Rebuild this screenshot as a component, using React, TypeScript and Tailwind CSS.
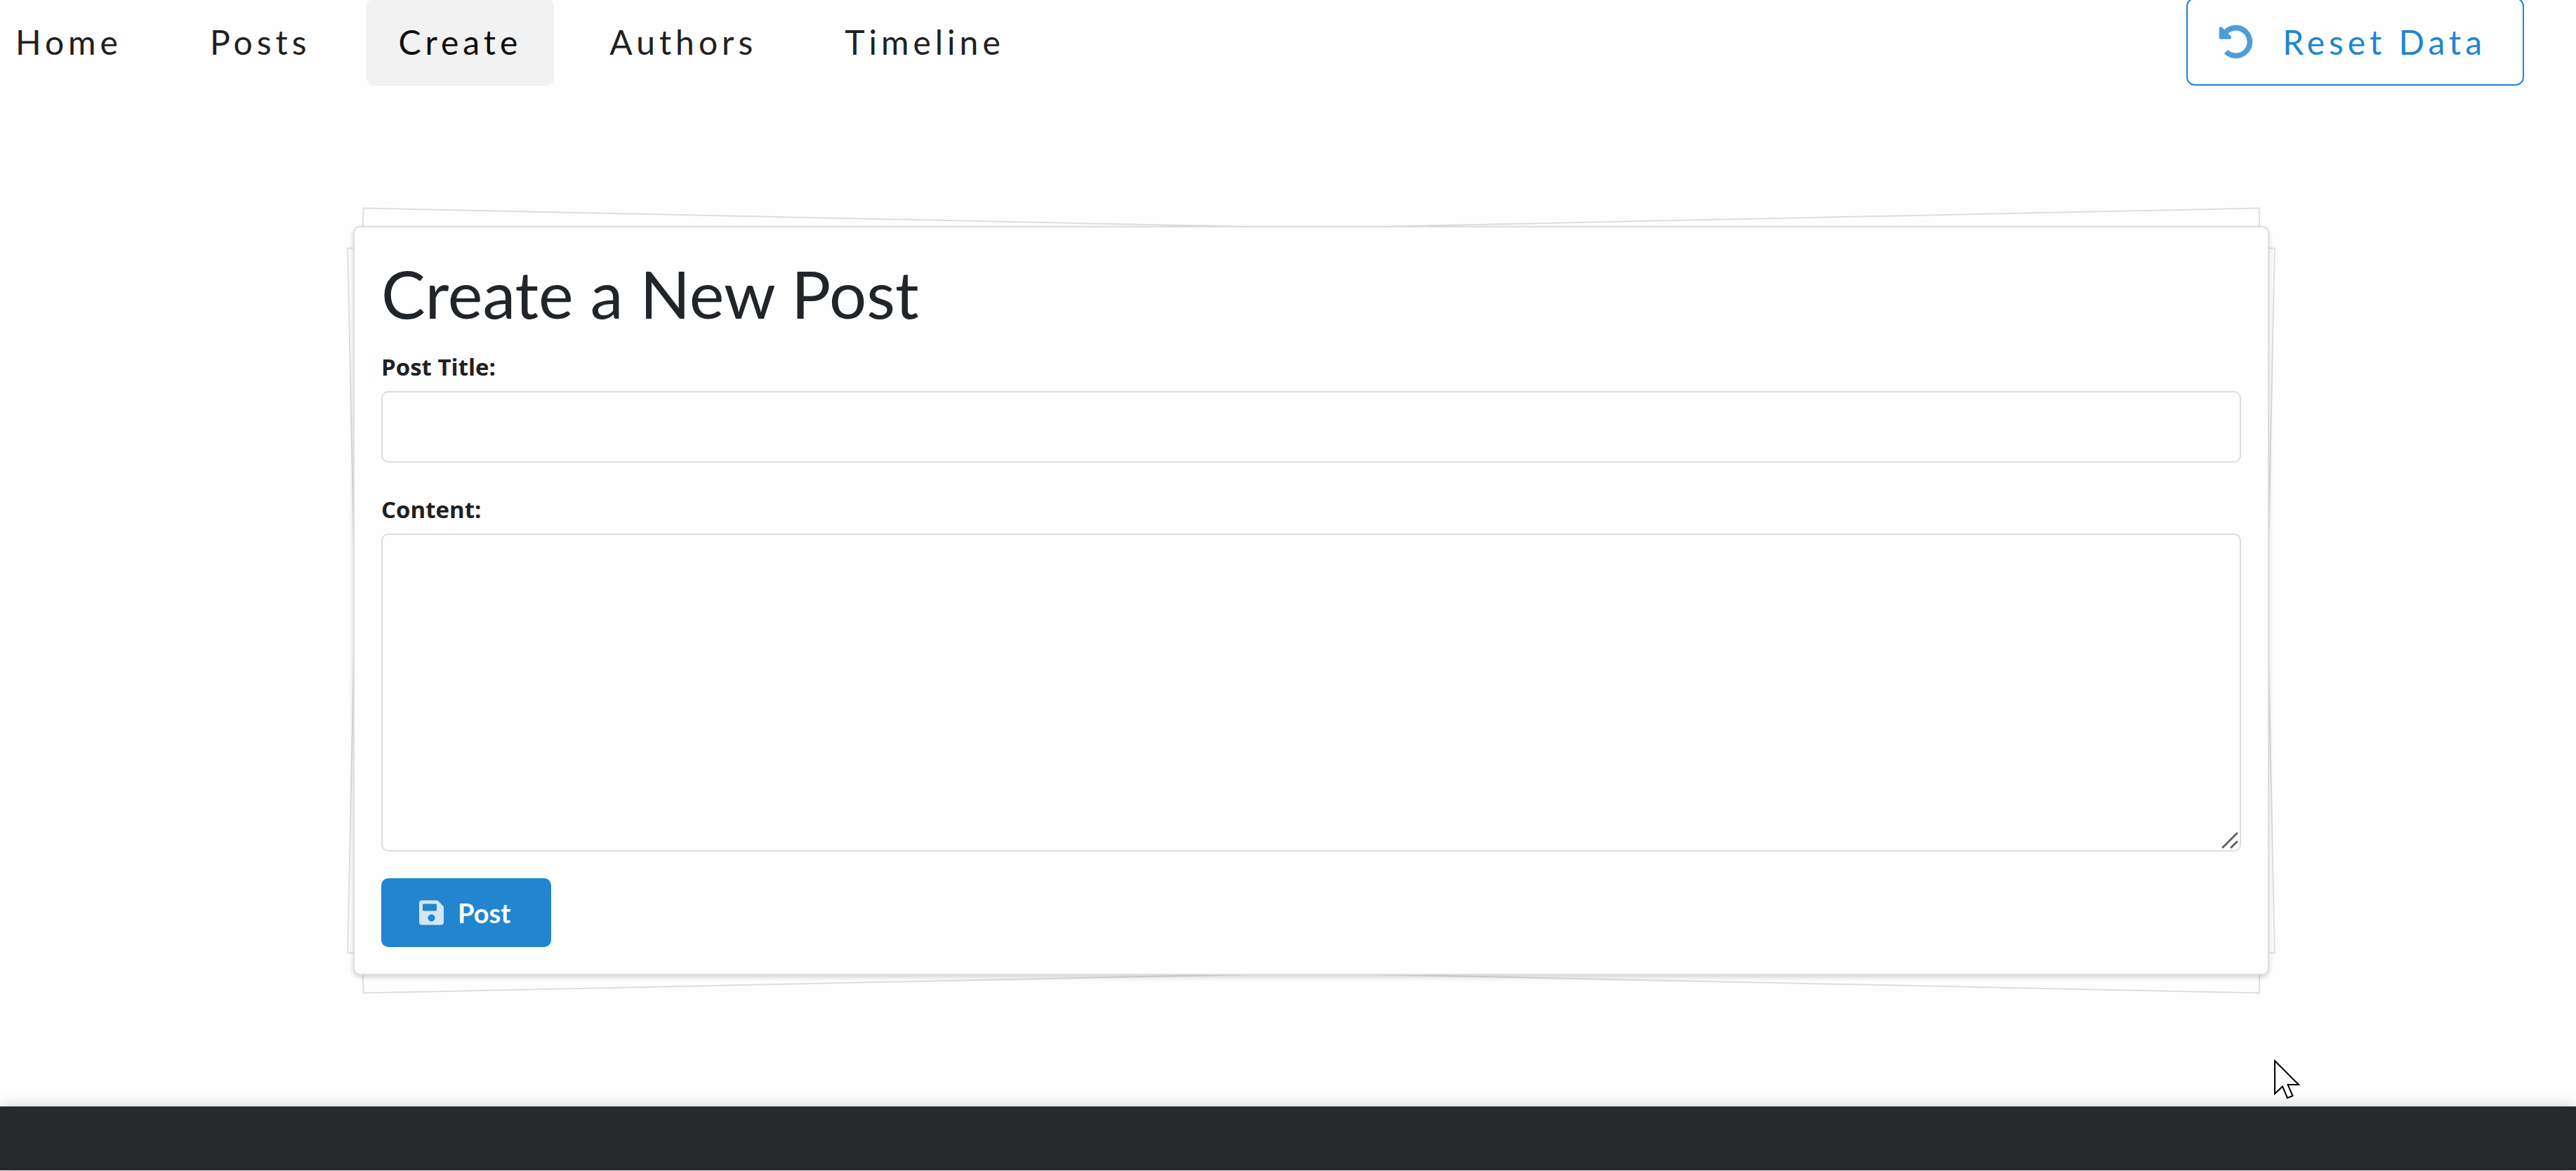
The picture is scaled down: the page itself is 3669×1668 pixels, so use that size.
import { FaSave, FaUndoAlt } from "react-icons/fa";

const links = ["Home", "Posts", "Create", "Authors", "Timeline"];

function NavBar() {
  return (
    <header className="-mt-[3px] flex items-center justify-between pr-[74px]">
      <nav className="-ml-6 flex gap-[33px]">
        {links.map((label) => (
          <a
            key={label}
            href="#"
            aria-current={label === "Create" ? "page" : undefined}
            className={
              label === "Create"
                ? "flex h-[124px] items-center rounded-xl bg-[#f2f2f2] px-[46px] text-[48px] tracking-[6px] text-[#0d0d0d]"
                : "flex h-[124px] items-center rounded-xl px-[46px] text-[48px] tracking-[6px] text-[#212121]"
            }
          >
            {label}
          </a>
        ))}
      </nav>
      <button
        type="button"
        className="flex h-[125px] items-center gap-[42px] rounded-xl border-2 border-[#2185d0] pr-[52px] pl-11 text-[48px] tracking-[6px] text-[#2185d0]"
      >
        <FaUndoAlt className="size-[49px] opacity-80" aria-hidden="true" />
        Reset Data
      </button>
    </header>
  );
}

function PostForm() {
  return (
    <section className="relative z-0 p-0.5">
      <div className="absolute inset-0.5 -z-20 rotate-[1.2deg] border-2 border-[#dededf] bg-[#fefefe]" />
      <div className="absolute inset-0.5 -z-20 -rotate-[1.2deg] border-2 border-[#dededf] bg-[#fefefe]" />
      <div className="absolute inset-0 -z-10 rounded-[10px] border-2 border-[#dededf] bg-[#fefefe] shadow-[0_3px_6px_rgba(34,36,38,0.2)]" />
      <form
        className="flex flex-col items-start p-[38px]"
        onSubmit={(e) => e.preventDefault()}
      >
        <h1 className="mb-[25px] text-[94px] leading-[112px] text-[#212529]">
          Create a New Post
        </h1>
        <label
          htmlFor="title"
          className="font-['Open_Sans',sans-serif] text-[33px] leading-[48px] font-bold text-[#212121]"
        >
          Post Title:
        </label>
        <input
          id="title"
          type="text"
          className="mt-[10px] h-[102px] w-full rounded-[10px] border-2 border-[#dededf] bg-transparent px-9 text-[36px] outline-none"
        />
        <label
          htmlFor="content"
          className="mt-[43px] font-['Open_Sans',sans-serif] text-[33px] leading-[48px] font-bold text-[#212121]"
        >
          Content:
        </label>
        <div className="relative mt-[10px] w-full">
          <textarea
            id="content"
            className="block h-[453px] w-full resize-none rounded-[10px] border-2 border-[#dededf] bg-transparent px-9 py-7 text-[36px] outline-none"
          />
          <svg
            className="absolute right-1 bottom-1 size-6"
            viewBox="0 0 24 24"
            fill="none"
            stroke="#636366"
            strokeWidth="3"
            strokeLinecap="round"
            aria-hidden="true"
          >
            <path d="M2 22 22 2M14 22 22 14" />
          </svg>
        </div>
        <button
          type="submit"
          className="mt-[38px] flex h-[98px] items-center gap-5 rounded-[10px] bg-[#2185d0] pr-[58px] pl-[54px] text-[38px] font-bold text-white"
        >
          <FaSave className="h-10 w-[35px] opacity-80" aria-hidden="true" />
          Post
        </button>
      </form>
    </section>
  );
}

function Pointer() {
  return (
    <svg
      className="absolute top-[1508px] left-[3238px] h-[58px] w-10"
      viewBox="0 0 40 58"
      fill="#fff"
      stroke="#000"
      strokeWidth="2"
      aria-hidden="true"
    >
      <path d="M2 3V50L13 39.500L20 56L27.500 53L20.500 37H36Z" />
    </svg>
  );
}

export default function App() {
  return (
    <div className="relative flex min-h-screen flex-col overflow-hidden bg-[#fefefe] font-[Lato,sans-serif]">
      <NavBar />
      <main className="flex-1 pt-[200px] pr-[437px] pb-[187px] pl-[503px]">
        <PostForm />
      </main>
      <footer className="mb-px h-[91px] bg-[#27292d] shadow-[0_0_20px_rgba(0,0,0,0.2)]" />
      <Pointer />
    </div>
  );
}
